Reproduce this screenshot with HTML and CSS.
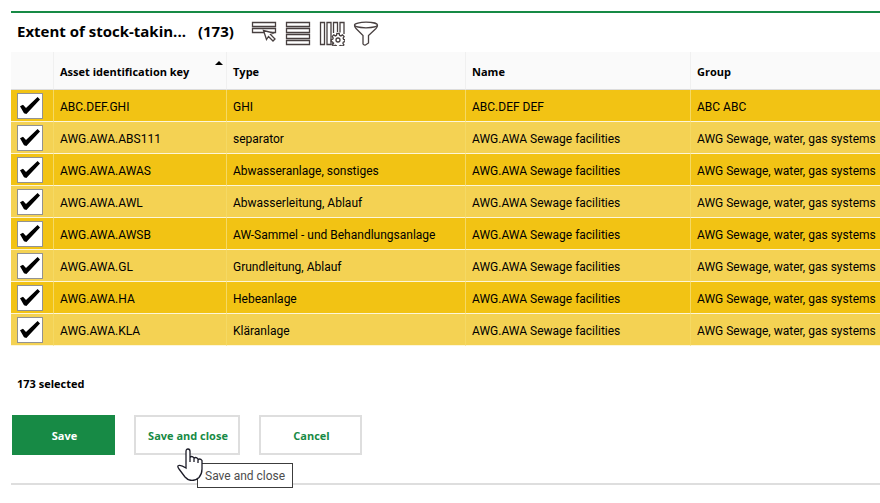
FILE: index.html
```html
<!DOCTYPE html>
<html lang="en">
<head>
<meta charset="utf-8">
<title>Extent of stock-taking</title>
<link rel="stylesheet" href="styles.css">
</head>
<body>
<main class="panel">
  <header class="toolbar">
    <h1 class="title">Extent of stock-takin...</h1>
    <span class="count">(173)</span>
    <div class="tools">
      <button type="button" class="tool" aria-label="Select rows">
        <svg viewBox="0 0 26 26" width="26" height="26"><path d="M1.500 2.500h23v4h-23zM14 12.500H1.500v-4h23v4h-5"/><path fill="#fff" d="M12.500 10.500l3 9 2-3 4.500 4.500 2-2-4.500-4.500 3-1.500z"/></svg>
      </button>
      <button type="button" class="tool" aria-label="All rows">
        <svg viewBox="0 0 26 26" width="26" height="26"><path d="M1.500 2.500h23v4h-23zM1.500 8.500h23v4h-23zM1.500 14.500h23v4h-23zM1.500 20.500h23v4h-23z"/></svg>
      </button>
      <button type="button" class="tool" aria-label="Configure columns">
        <svg viewBox="0 0 26 26" width="26" height="26"><path d="M1.500 2.500h4v22h-4zM8 2.500h4v22H8zM14.500 13V2.500h4V12M21 12.500v-10h4V14M14.500 24.500v-2"/><path d="M17.800 13.500h2.400l.4 1.800 1.300.6 1.600-1 1.600 1.600-1 1.600.5 1.300 1.300.3v2l-1.500.4-.5 1.200 1 1.500-1.600 1.500-1.500-.9-1.300.5-.3 1.100h-2.400l-.4-1.200-1.200-.5-1.500 1-1.600-1.600 1-1.500-.5-1.200-1.300-.4v-2l1.400-.3.5-1.300-1-1.500 1.600-1.600 1.500 1 1.200-.6z"/><circle cx="19" cy="20" r="2"/></svg>
      </button>
      <button type="button" class="tool" aria-label="Filter">
        <svg viewBox="0 0 26 26" width="26" height="26"><ellipse cx="13" cy="5" rx="11.500" ry="2.800"/><path d="M1.500 5q0 2 1.500 3.500l7 7V24q1 1.500 2.500 1l3-2v-7.500l7.500-7Q24.500 7 24.500 5"/></svg>
      </button>
    </div>
  </header>

  <table class="grid">
    <colgroup><col class="c-check"><col class="c-key"><col class="c-type"><col class="c-name"><col></colgroup>
    <thead>
      <tr><th></th><th aria-sort="ascending">Asset identification key<svg class="sort" viewBox="0 0 8 4" width="8" height="4"><path d="M0 4l4-4 4 4z"/></svg></th><th>Type</th><th>Name</th><th>Group</th></tr>
    </thead>
    <tbody>
      <tr><td><input type="checkbox" checked aria-label="ABC.DEF.GHI"></td><td>ABC.DEF.GHI</td><td>GHI</td><td>ABC.DEF DEF</td><td>ABC ABC</td></tr>
      <tr><td><input type="checkbox" checked aria-label="AWG.AWA.ABS111"></td><td>AWG.AWA.ABS111</td><td>separator</td><td>AWG.AWA Sewage facilities</td><td>AWG Sewage, water, gas systems</td></tr>
      <tr><td><input type="checkbox" checked aria-label="AWG.AWA.AWAS"></td><td>AWG.AWA.AWAS</td><td>Abwasseranlage, sonstiges</td><td>AWG.AWA Sewage facilities</td><td>AWG Sewage, water, gas systems</td></tr>
      <tr><td><input type="checkbox" checked aria-label="AWG.AWA.AWL"></td><td>AWG.AWA.AWL</td><td>Abwasserleitung, Ablauf</td><td>AWG.AWA Sewage facilities</td><td>AWG Sewage, water, gas systems</td></tr>
      <tr><td><input type="checkbox" checked aria-label="AWG.AWA.AWSB"></td><td>AWG.AWA.AWSB</td><td>AW-Sammel - und Behandlungsanlage</td><td>AWG.AWA Sewage facilities</td><td>AWG Sewage, water, gas systems</td></tr>
      <tr><td><input type="checkbox" checked aria-label="AWG.AWA.GL"></td><td>AWG.AWA.GL</td><td>Grundleitung, Ablauf</td><td>AWG.AWA Sewage facilities</td><td>AWG Sewage, water, gas systems</td></tr>
      <tr><td><input type="checkbox" checked aria-label="AWG.AWA.HA"></td><td>AWG.AWA.HA</td><td>Hebeanlage</td><td>AWG.AWA Sewage facilities</td><td>AWG Sewage, water, gas systems</td></tr>
      <tr><td><input type="checkbox" checked aria-label="AWG.AWA.KLA"></td><td>AWG.AWA.KLA</td><td>Kläranlage</td><td>AWG.AWA Sewage facilities</td><td>AWG Sewage, water, gas systems</td></tr>
    </tbody>
  </table>

  <p class="selected">173 selected</p>

  <footer class="actions">
    <button type="button" class="btn primary">Save</button>
    <div class="hovered">
      <button type="button" class="btn wide" aria-describedby="tip">Save and close</button>
      <span class="tooltip" id="tip" role="tooltip">Save and close</span>
      <svg class="pointer" viewBox="0 0 26 33" width="26" height="33" aria-hidden="true"><path d="M9 20V3.500q0-2.500 2-2.500t2 2.500V14V10q0-1.500 1.500-1.500T17 10v4V11q0-1.500 1.500-1.500T21 11v4V12.500q0-1.500 1.500-1.500T25 12.500V21q0 5-3 8.500-3 3-7 3-4 0-7-3.500L2 21Q0 18 1.500 17.500 4 16.500 9 20z"/></svg>
    </div>
    <button type="button" class="btn">Cancel</button>
  </footer>
</main>
</body>
</html>
```

FILE: styles.css
```css
* { box-sizing: border-box; }

body {
  display: flow-root;
  min-height: 100vh;
  margin: 0;
  background: #fff;
  color: #000;
  font: 12px/16px "Open Sans", "Noto Sans", sans-serif;
}

.panel {
  margin: 11px 0 0 11px;
  border-top: 2px solid #178a45;
  border-bottom: 2px solid #dedede;
}

.toolbar {
  display: flex;
  align-items: center;
  height: 39px;
  padding-left: 6px;
  font-size: 15px;
  font-weight: 700;
}

.title,
.count { margin: 0 12px 4px 0; font-size: inherit; font-weight: inherit; }

.tools { display: flex; gap: 8px; margin-left: 5px; }

.tool { display: flex; padding: 0; border: 0; background: none; }

.tool svg { fill: none; stroke: #484040; stroke-width: 1.300; }

.grid {
  width: 100%;
  table-layout: fixed;
  border-collapse: separate;
  border-spacing: 0;
}

.c-check { width: 43px; }
.c-key { width: 173px; }
.c-type { width: 239px; }
.c-name { width: 225px; }

.grid th,
.grid td {
  padding: 2px 0 0 6px;
  text-align: left;
  white-space: nowrap;
}

.grid th {
  position: relative;
  height: 38px;
  background: #fafafa;
  border-right: 1px solid #f0f0f0;
  border-bottom: 1px solid #dcdcdc;
  font-size: 11px;
  font-weight: 700;
}

.grid td {
  height: 32px;
  border-right: 1px solid #f5d964;
  border-bottom: 1px solid #fdf6d8;
  font-family: Roboto, "Open Sans", sans-serif;
}

.grid td:first-child { padding-top: 0; }

.grid th:last-child,
.grid td:last-child { border-right: 0; }

.grid tbody tr:nth-child(odd) { background: #f2c314; }
.grid tbody tr:nth-child(even) { background: #f4d253; }

.sort { position: absolute; top: 9px; right: 3px; }

.grid input {
  display: grid;
  place-items: center;
  width: 26px;
  height: 26px;
  margin: 0;
  appearance: none;
  background: #fff;
  border: 1px solid #929292;
}

.grid input:checked::before {
  content: "";
  width: 20px;
  height: 17px;
  background: #000;
  clip-path: polygon(0 55%, 15% 45%, 30% 65%, 88% 0, 100% 14%, 32% 100%, 20% 95%);
}

.selected { margin: 30px 0 23px 6px; font-size: 11px; font-weight: 700; }

.actions { display: flex; gap: 19px; padding: 0 1px 28px; }

.hovered { position: relative; }

.btn {
  width: 103px;
  height: 40px;
  padding: 2px 0 0 2px;
  background: #fff;
  border: 2px solid #dedede;
  color: #178a45;
  font: inherit;
  font-size: 11px;
  font-weight: 700;
}

.btn.wide { width: 106px; }

.btn.primary { background: #178a45; border-color: #178a45; color: #fff; }

.tooltip {
  position: absolute;
  top: 48px;
  left: 63px;
  padding: 4px 7px 3px;
  background: #fff;
  border: 1px solid #3c3c3c;
  color: #4c4c4c;
  font-family: Roboto, "Open Sans", sans-serif;
  white-space: nowrap;
}

.pointer {
  position: absolute;
  top: 33px;
  left: 43px;
  fill: #fff;
  stroke: #1c1c28;
  stroke-width: 1.300;
}
```
